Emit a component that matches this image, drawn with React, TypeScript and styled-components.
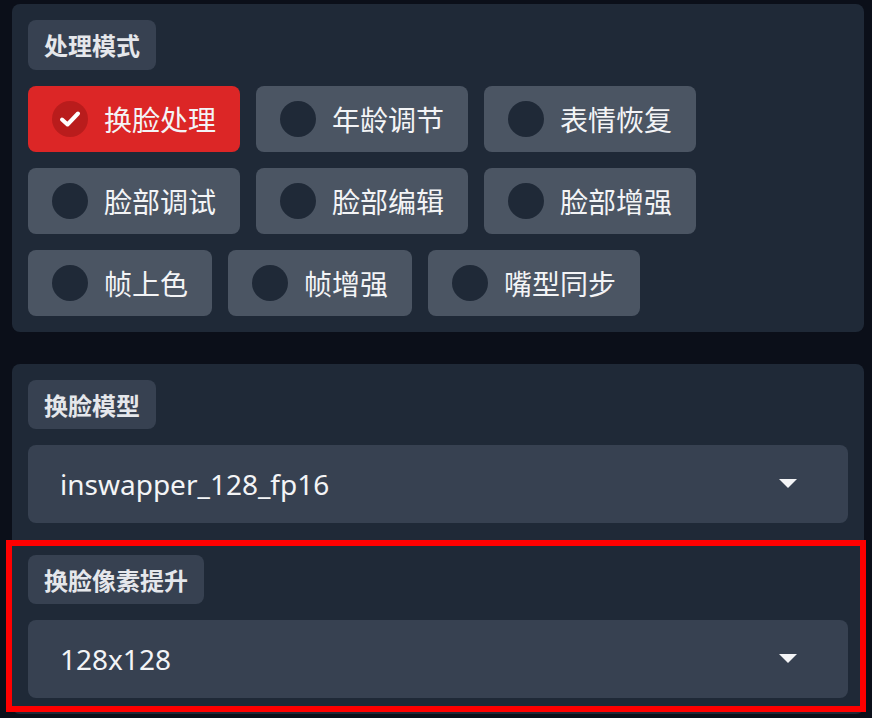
import React from "react";
import styled, { createGlobalStyle } from "styled-components";

const GlobalStyle = createGlobalStyle`
  html, body {
    margin: 0;
    padding: 0;
    background: #0b0f19;
    overflow: hidden;
  }
  body {
    font-family: "Noto Sans", "Noto Sans CJK SC", sans-serif;
  }
  * { box-sizing: border-box; }
`;

const Page = styled.div`
  width: 872px;
  height: 718px;
  padding: 4px 8px 0 12px;
  display: flex;
  flex-direction: column;
  gap: 32px;
`;

const Panel = styled.div<{ $gap: number }>`
  background: #1f2937;
  border-radius: 8px;
  padding: 16px;
  display: flex;
  flex-direction: column;
  gap: ${(p) => p.$gap}px;
`;

const Label = styled.div<{ $h?: number }>`
  align-self: flex-start;
  height: ${(p) => p.$h ?? 49}px;
  padding: 0 16px;
  display: flex;
  align-items: center;
  background: #374151;
  border-radius: 8px;
  color: #e5e7eb;
  font-family: "Noto Sans CJK SC", "Noto Sans", sans-serif;
  font-weight: 700;
  font-size: 24px;
  line-height: 1;
`;

const Options = styled.div`
  display: flex;
  flex-wrap: wrap;
  gap: 16px;
`;

const Option = styled.div<{ $checked?: boolean }>`
  height: 66px;
  padding: 0 24px;
  display: flex;
  align-items: center;
  gap: 16px;
  border-radius: 8px;
  background: ${(p) => (p.$checked ? "#dc2626" : "#4b5563")};
  color: #f3f4f6;
  font-family: "Noto Sans CJK SC", "Noto Sans", sans-serif;
  font-size: 28px;
  line-height: 1;
`;

const Radio = styled.span<{ $checked?: boolean }>`
  width: 36px;
  height: 36px;
  border-radius: 50%;
  flex: none;
  display: flex;
  align-items: center;
  justify-content: center;
  background: ${(p) => (p.$checked ? "#b91c1c" : "#1f2937")};
`;

const Section = styled.div`
  display: flex;
  flex-direction: column;
  gap: 16px;
`;

const Outlined = styled(Section)`
  position: relative;
  &::after {
    content: "";
    position: absolute;
    top: -15px;
    left: -22px;
    right: -18px;
    bottom: -14px;
    border: 6px solid #ff0000;
    pointer-events: none;
  }
`;

const Select = styled.div`
  height: 78px;
  padding: 0 51px 0 32px;
  display: flex;
  align-items: center;
  justify-content: space-between;
  background: #374151;
  border-radius: 8px;
  color: #f3f4f6;
  font-family: "Noto Sans", sans-serif;
  font-size: 28px;
`;

const Caret = () => (
  <svg width="18" height="10" viewBox="0 0 18 10">
    <path d="M0 0 L18 0 L9 9 Z" fill="#f3f4f6" />
  </svg>
);

const Check = () => (
  <svg width="22" height="18" viewBox="0 0 22 18">
    <path
      d="M3 9.5 L8.5 14.5 L19 3.5"
      fill="none"
      stroke="#ffffff"
      strokeWidth="4"
      strokeLinecap="round"
      strokeLinejoin="round"
    />
  </svg>
);

const modes = [
  "换脸处理",
  "年龄调节",
  "表情恢复",
  "脸部调试",
  "脸部编辑",
  "脸部增强",
  "帧上色",
  "帧增强",
  "嘴型同步",
];

export default function App() {
  return (
    <>
      <GlobalStyle />
      <Page>
        <Panel $gap={16}>
          <Label $h={50}>处理模式</Label>
          <Options>
            {modes.map((m, i) => (
              <Option key={m} $checked={i === 0}>
                <Radio $checked={i === 0}>{i === 0 && <Check />}</Radio>
                {m}
              </Option>
            ))}
          </Options>
        </Panel>
        <Panel $gap={32}>
          <Section>
            <Label>换脸模型</Label>
            <Select>
              <span>inswapper_128_fp16</span>
              <Caret />
            </Select>
          </Section>
          <Outlined>
            <Label>换脸像素提升</Label>
            <Select>
              <span>128x128</span>
              <Caret />
            </Select>
          </Outlined>
        </Panel>
      </Page>
    </>
  );
}
